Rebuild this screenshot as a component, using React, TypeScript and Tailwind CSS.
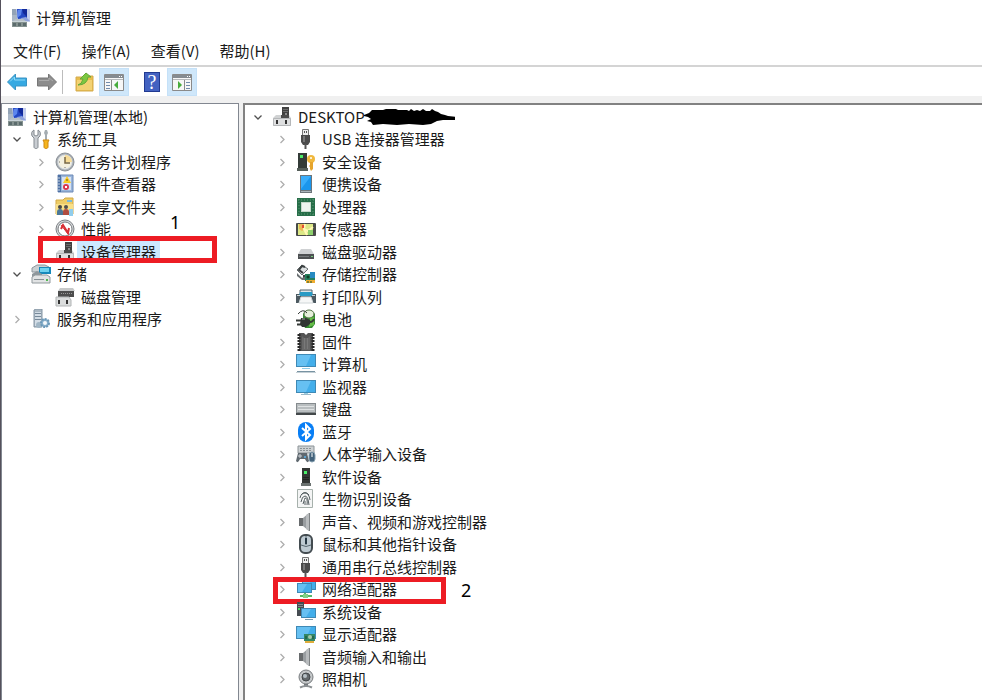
import type { ReactNode } from 'react'
import clsx from 'clsx'

interface TreeItem {
  label: string
  icon: keyof typeof icons
  level: number
  state?: 'open' | 'closed'
  selected?: boolean
  mark?: string
}

const screen = (x: number, y: number, w: number, h: number) => (
  <>
    <rect x={x} y={y} width={w} height={h} fill="#3f89b5" />
    <rect x={x + 1} y={y + 1} width={w - 2} height={h - 2} fill="#43aeea" />
    <path d={`M${x + 1} ${y + 1}h${w - 6}l-5 ${h - 2}h-${w - 11}z`} fill="#66c0f2" />
  </>
)

const computer = (
  <>
    <path d="M1 1h7v12H1z" fill="#a9b6c6" />
    <path d="M1 2h5M1 4h5M1 6h5" stroke="#7f90a5" />
    <path d="M5 1h14v13H7z" fill="#c3cdec" />
    <path d="M6 1h10v9l-9 1z" fill="#2448c4" />
    <path d="M7 2l4-1-1 6-4 3z" fill="#5c86ee" />
    <path d="M11 1h5v8l-4-4z" fill="#12299a" />
    <path d="M10 10l5-1 4 4h-8z" fill="#8fa2dc" />
    <path d="M4 11h8l4 3H2z" fill="#b7c0c7" />
    <path d="M1 14h15v5H1z" fill="#84918f" />
    <path d="M2 15h3v3H2zM7 15h3v3H7zM12 15h3v3h-3z" fill="#5b6b6c" />
    <path d="M1 13.500h15" stroke="#c9d3d8" />
  </>
)

const deviceManager = (
  <>
    <path d="M10 0h7v11h-7z" fill="#414141" />
    <path d="M11 2.500h5M11 4.500h5" stroke="#6d6d6d" />
    <path d="M13 6h2v2h-2z" fill="#8b8b8b" />
    <path d="M4 8h13l2 3v8H1v-8z" fill="#d0d2d3" />
    <path d="M1.500 11.500h17v7h-17z" fill="#dedfe0" stroke="#b5b7b9" />
    <path d="M4 13h2v4H4zM13 13h2v4h-2z" fill="#333" />
    <path d="M9 8h8v3H9z" fill="#4c4c4c" />
  </>
)

const usb = (
  <>
    <path d="M6.500 0.500h6v6h-6z" fill="#eee" stroke="#777" />
    <path d="M8.500 2v2M10.500 2v2" stroke="#555" />
    <path d="M5 6h9v7l-2 3H7l-2-3z" fill="#4b4b4b" />
    <path d="M7 7h2v6H7z" fill="#777" />
    <path d="M9.500 15v5" stroke="#555" strokeWidth="2" />
  </>
)

const speaker = (
  <>
    <path d="M3 6h4v8H3z" fill="#686b6d" />
    <path d="M7 6l6-5v18l-6-5z" fill="#999da0" />
    <path d="M10 3l3-2v18l-3-2z" fill="#b9bcbe" />
    <path d="M13.500 1v18" stroke="#7f8385" />
  </>
)

const icons = {
  computer,
  deviceManager,
  usb,
  speaker,
  tools: (
    <>
      <path d="M3 1v5l2 1 2-1V1c2 1 3 3 2 6L7 9v9c0 2-4 2-4 0V9L1 7c-1-3 0-5 2-6z" fill="#c9cdd2" stroke="#858b91" />
      <path d="M14 1h2l1 3-1 2v5h-2V6l-1-2z" fill="#a5adb2" />
      <path d="M12 11h6l-1 2v5c0 2-4 2-4 0v-5z" fill="#f5b51d" stroke="#ce8712" />
    </>
  ),
  clock: (
    <>
      <circle cx="10" cy="10" r="9" fill="#a8aeb4" stroke="#8a9096" />
      <circle cx="10" cy="10" r="7" fill="#f4f0df" stroke="#dce1e6" />
      <path d="M10 3a7 7 0 017 7h-7z" fill="#f6db96" />
      <path d="M10 5v6h5" fill="none" stroke="#776541" strokeWidth="1.500" />
      <path d="M10 15v1M4 10h1" stroke="#777" />
    </>
  ),
  events: (
    <>
      <path d="M3 1h15v17H3z" fill="#99b6dc" stroke="#6d89b5" />
      <path d="M3 1h3v17H3z" fill="#4d70a4" />
      <path d="M2 4h3M2 7h3M2 10h3M2 13h3M2 16h3" stroke="#c4d0df" />
      <path d="M7 3h9v13H7z" fill="#d7e2f1" />
      <path d="M12 2l4 7H8z" fill="#f9cb24" />
      <path d="M12 5v2" stroke="#705510" />
      <circle cx="11" cy="13" r="3" fill="#db354d" />
      <path d="M10 12l2 2m0-2l-2 2" stroke="#fff" />
    </>
  ),
  shared: (
    <>
      <path d="M1 3h7l2-2h8v16H1z" fill="#edcc67" stroke="#d4a943" />
      <path d="M12 3h5v2h-5z" fill="#78b9dd" />
      <path d="M1 7h17v11H1z" fill="#f8df87" />
      <circle cx="5" cy="10" r="2" fill="#474747" />
      <circle cx="11" cy="10" r="2" fill="#505050" />
      <path d="M2 15q0-3 3-3t3 3v3H2z" fill="#4c7798" />
      <path d="M8 15q0-3 3-3t3 3v3H8z" fill="#b04d40" />
      <path d="M14 12h4v7h-4z" fill="#91cdec" />
    </>
  ),
  performance: (
    <>
      <circle cx="10" cy="10" r="9" fill="#d7dadd" stroke="#7d8184" />
      <circle cx="10" cy="10" r="7" fill="#fff" stroke="#75797c" />
      <path d="M6 10l2-4 5 8 1-5" fill="none" stroke="#d82f34" strokeWidth="2" />
      <path d="M6 6l7 9" stroke="#d82f34" />
    </>
  ),
  storage: (
    <>
      <path d="M1 4l5-3h8l4 2v5H1z" fill="#cbd0d3" stroke="#8c969c" />
      <path d="M8 3h12v7H8z" fill="#1689bb" />
      <path d="M9 4h9v4H9z" fill="#6ed1ee" />
      <path d="M1 10l5-3 5 3v4H1z" fill="#8e979c" />
      <path d="M1 13l3-2h12l3 2v6H1z" fill="#e1e3e4" stroke="#91999d" />
      <path d="M3 15.500h10" stroke="#899297" />
      <path d="M15 15h2v2h-2z" fill="#53b852" />
    </>
  ),
  diskManagement: (
    <>
      <path d="M3 4h16v6H3z" fill="#4d4d4d" />
      <path d="M5 1h13l2 3H3z" fill="#c6c8c9" />
      <path d="M6 6.500h12" stroke="#999" strokeDasharray="1 1" />
      <path d="M1 10h13l2 3v6H1z" fill="#dbdddd" stroke="#b1b4b5" />
      <path d="M3 13h2v4H3zM11 13h2v4h-2z" fill="#333" />
    </>
  ),
  services: (
    <>
      <path d="M3 1l2-1h6v18H3z" fill="#aab7c2" stroke="#8495a4" />
      <path d="M4 3h6v14H4z" fill="#d3dde6" />
      <path d="M4 4.500h6M4 7.500h6M4 10.500h6" stroke="#778999" />
      <circle cx="8" cy="16" r="3" fill="#a1b6c5" />
      <circle cx="14" cy="14" r="4" fill="#88afcb" stroke="#6b98b8" strokeWidth="2" strokeDasharray="2 1" />
      <circle cx="14" cy="14" r="2" fill="#f5f8fb" />
    </>
  ),
  security: (
    <>
      <path d="M2 1h9v15H2z" fill="#343b38" />
      <path d="M1 16h11v3H1z" fill="#555e59" />
      <path d="M4 3h3v3H4z" fill="#4bea66" />
      <circle cx="15" cy="7" r="4" fill="#f0b83e" />
      <circle cx="15" cy="6" r="1" fill="#fff" />
      <path d="M14 10h3v7l-2 2-1-2v-2l-1-1 1-1z" fill="#e6a52d" />
    </>
  ),
  portable: (
    <>
      <path d="M4 1h12v18H4z" fill="#6d757a" />
      <path d="M5 2h10v14H5z" fill="#1b96ec" />
      <path d="M5 2h10L5 15z" fill="#39adfa" />
      <path d="M5 17.500h10" stroke="#aab4ba" />
    </>
  ),
  processor: (
    <>
      <path d="M1 1h18v18H1z" fill="#276e49" />
      <path d="M3 2v16M17 2v16M2 3h16M2 17h16" stroke="#5b9874" strokeDasharray="1 2" />
      <path d="M5 5h10v10H5z" fill="#c5d8ca" />
      <path d="M6 6h8v8H6z" fill="#edf4ef" />
    </>
  ),
  sensor: (
    <>
      <rect y="4" width="20" height="13" rx="1" fill="#494b49" />
      <path d="M2 5h15v11H2z" fill="#dce886" />
      <path d="M3 5h6v5l-3 2-3-2z" fill="#edb755" />
      <path d="M9 5l-1 5 4 2 5-4M8 10l3 6" fill="none" stroke="#fff8b5" strokeWidth="2" />
      <path d="M6 6h2v3H6z" fill="#e24f37" />
      <path d="M12 11h5v5h-5z" fill="#8ed06d" />
    </>
  ),
  drive: (
    <>
      <path d="M5 7h10l3 5H2z" fill="#cfd1d3" />
      <path d="M2 12h16v5H2z" fill="#4d5052" />
      <path d="M3 14.500h10" stroke="#767a7c" />
      <path d="M15 14h2v1h-2z" fill="#74ce7b" />
    </>
  ),
  storageController: (
    <>
      <path d="M6 1l6 4-6 6-5-5z" fill="#dce0e1" stroke="#6a7072" />
      <path d="M9 3L6 2 3 6l4 3M8 11v3h5" fill="none" stroke="#3b4041" strokeWidth="2" />
      <path d="M1 9l5 5 4-2v4H6l-5-4z" fill="#686e70" />
      <path d="M9 10h10v7H9z" fill="#25805d" />
      <path d="M14 8h5v6h-5z" fill="#278ac1" />
      <path d="M10 16h9v3h-9z" fill="#efad30" />
      <path d="M12 17v2M15 17v2M11 12h2v2h-2z" stroke="#155436" />
    </>
  ),
  printer: (
    <>
      <path d="M4 3h12v4H4z" fill="#dbe5e9" stroke="#52626c" />
      <path d="M0 7h4l2 2h8l2-2h4v9h-4l-2-4H6l-2 4H0z" fill="#4c5960" />
      <path d="M4 5h12l1 4H3z" fill="#289ac4" />
      <path d="M5 10h10l2 6H3z" fill="#f6f7f7" stroke="#d0d6d8" />
      <path d="M1 8.500h3M16 8.500h3" stroke="#c9d4d8" />
    </>
  ),
  battery: (
    <>
      <path d="M7 5l2-3h7l3 3v10l-3 4H9l-2-4z" fill="#368b32" />
      <ellipse cx="13" cy="5" rx="5" ry="4" fill="#e5efda" stroke="#527245" />
      <path d="M14 9l4-1v8l-5 2z" fill="#65bd47" />
      <path d="M2 5q5-6 9-1" fill="none" stroke="#343936" />
      <path d="M0 11.500h5M1 15.500h5" fill="none" stroke="#343936" strokeWidth="2" />
      <path d="M5 9h5l4 2v4l-4 3H6l-2-3z" fill="#303632" />
      <path d="M14 13q3 0 4-3" fill="none" stroke="#343936" strokeWidth="2" />
      <path d="M6 10h3" stroke="#9a9f9b" />
    </>
  ),
  firmware: (
    <>
      <path d="M3 1h5l2 2 2-2h5v18H3z" fill="#555" />
      <path d="M3 2v17M17 2v17" stroke="#282828" strokeWidth="3" strokeDasharray="2 1" />
      <path d="M6 4l2 2h4l2-2v14H6z" fill="#686868" />
      <path d="M8.500 6v11M11.500 6v11" stroke="#797979" />
    </>
  ),
  pc: (
    <>
      {screen(0, 0, 20, 13)}
      <path d="M6 14.500h8" stroke="#8fcbe7" />
      <path d="M1 17.500h18" stroke="#7893a2" />
      <path d="M0 18.500h20" stroke="#c5d0d6" />
    </>
  ),
  monitor: (
    <>
      {screen(0, 3, 20, 13)}
      <path d="M8 16h4v1H8z" fill="#9ad0e6" />
      <path d="M5 17.500h10" stroke="#9dbac8" />
    </>
  ),
  keyboard: (
    <>
      <path d="M0 4h20v12H0z" fill="#858b8e" />
      <path d="M1 5h18v8H1z" fill="#b9bec0" />
      <path d="M2 7.500h16M2 10.500h16" stroke="#dfe2e3" />
      <path d="M0 15h20" stroke="#43484a" strokeWidth="2" />
    </>
  ),
  bluetooth: (
    <>
      <rect x="2" width="16" height="20" rx="8" fill="#087ef5" />
      <path d="M6 6l8 7-4 4V3l4 4-8 7" fill="none" stroke="#fff" strokeWidth="2" />
    </>
  ),
  hid: (
    <>
      <path d="M2 2h16v7H2z" fill="#cdd1d3" stroke="#8c9397" />
      <path d="M4 4.500h12M4 6.500h12" stroke="#8b9296" strokeDasharray="2 1" />
      <path d="M2 9h9l2 8q-2 3-4-2H4q-2 5-4 2z" fill="#606970" />
      <path d="M4 10v4M2 12h4" stroke="#cdd2d6" />
      <rect x="13" y="8" width="6" height="10" rx="3" fill="#43627b" stroke="#87a1b1" />
      <path d="M16 9v4" stroke="#fff" />
      <path d="M8 12h2v2H8z" fill="#58a2cf" />
    </>
  ),
  software: (
    <>
      <path d="M6 1h8v15H6z" fill="#343735" />
      <path d="M5 16h10v3H5z" fill="#6b7270" />
      <path d="M8 4h3v3H8z" fill="#48ef68" />
      <path d="M7 10.500h6M7 12.500h6" stroke="#222" />
    </>
  ),
  fingerprint: (
    <>
      <path d="M1.500 0.500h15v18h-15z" fill="#f4f5f5" stroke="#a7b1ac" />
      <g fill="none" stroke="#555e62">
        <path d="M5 6q4-5 8 0M4 9q1-5 5-5t5 7M5 13q1-6 4-6t4 9M7 15q2-6 2-6 3 0 2 7M9 16l0-4" />
      </g>
    </>
  ),
  mouse: (
    <>
      <rect x="4" y="1" width="12" height="18" rx="5" fill="#bdc9d1" stroke="#434b50" strokeWidth="2" />
      <path d="M10 2v9M5 11q5 3 10 0" fill="none" stroke="#596871" />
      <path d="M10 4v6" stroke="#263743" strokeWidth="2" />
    </>
  ),
  network: (
    <>
      {screen(6, 1, 14, 10)}
      {screen(1, 4, 15, 10)}
      <path d="M9 14v3M4 17h12" stroke="#55ba67" strokeWidth="2" />
      <path d="M7 15h5v4H7z" fill="#82d088" />
    </>
  ),
  system: (
    <>
      <path d="M1 0h7v14H1z" fill="#454c51" />
      <path d="M2 2.500h5M2 4.500h5" stroke="#838b90" />
      <path d="M2 6h2v2H2z" fill="#48dd64" />
      {screen(5, 6, 15, 10)}
      <path d="M9 17.500h8" stroke="#7999aa" />
    </>
  ),
  display: (
    <>
      {screen(0, 2, 20, 13)}
      <path d="M8 10h11v7H8z" fill="#348765" />
      <circle cx="14" cy="13" r="2" fill="#a7c9a8" />
      <path d="M9 17h9v2H9z" fill="#e0ae3c" />
      <path d="M10 12v3M17 12v3" stroke="#174a34" />
    </>
  ),
  camera: (
    <>
      <circle cx="10" cy="8" r="7" fill="#c4c7c9" stroke="#777b7e" />
      <circle cx="10" cy="8" r="4" fill="#63686b" stroke="#42474a" />
      <circle cx="9" cy="7" r="2" fill="#b6c0c6" />
      <path d="M8 15h4v2H8z" fill="#74797c" />
      <path d="M4 18.500q6-3 12 0" fill="none" stroke="#8c9194" strokeWidth="2" />
    </>
  )
}

const consoleTree: TreeItem[] = [
  { label: '计算机管理(本地)', icon: 'computer', level: 0 },
  { label: '系统工具', icon: 'tools', level: 0, state: 'open' },
  { label: '任务计划程序', icon: 'clock', level: 1, state: 'closed' },
  { label: '事件查看器', icon: 'events', level: 1, state: 'closed' },
  { label: '共享文件夹', icon: 'shared', level: 1, state: 'closed' },
  { label: '性能', icon: 'performance', level: 1, state: 'closed' },
  { label: '设备管理器', icon: 'deviceManager', level: 1, selected: true, mark: '1' },
  { label: '存储', icon: 'storage', level: 0, state: 'open' },
  { label: '磁盘管理', icon: 'diskManagement', level: 1 },
  { label: '服务和应用程序', icon: 'services', level: 0, state: 'closed' }
]

const devices: TreeItem[] = [
  { label: 'DESKTOP', icon: 'deviceManager', level: 0, state: 'open' },
  { label: 'USB 连接器管理器', icon: 'usb', level: 1, state: 'closed' },
  { label: '安全设备', icon: 'security', level: 1, state: 'closed' },
  { label: '便携设备', icon: 'portable', level: 1, state: 'closed' },
  { label: '处理器', icon: 'processor', level: 1, state: 'closed' },
  { label: '传感器', icon: 'sensor', level: 1, state: 'closed' },
  { label: '磁盘驱动器', icon: 'drive', level: 1, state: 'closed' },
  { label: '存储控制器', icon: 'storageController', level: 1, state: 'closed' },
  { label: '打印队列', icon: 'printer', level: 1, state: 'closed' },
  { label: '电池', icon: 'battery', level: 1, state: 'closed' },
  { label: '固件', icon: 'firmware', level: 1, state: 'closed' },
  { label: '计算机', icon: 'pc', level: 1, state: 'closed' },
  { label: '监视器', icon: 'monitor', level: 1, state: 'closed' },
  { label: '键盘', icon: 'keyboard', level: 1, state: 'closed' },
  { label: '蓝牙', icon: 'bluetooth', level: 1, state: 'closed' },
  { label: '人体学输入设备', icon: 'hid', level: 1, state: 'closed' },
  { label: '软件设备', icon: 'software', level: 1, state: 'closed' },
  { label: '生物识别设备', icon: 'fingerprint', level: 1, state: 'closed' },
  { label: '声音、视频和游戏控制器', icon: 'speaker', level: 1, state: 'closed' },
  { label: '鼠标和其他指针设备', icon: 'mouse', level: 1, state: 'closed' },
  { label: '通用串行总线控制器', icon: 'usb', level: 1, state: 'closed' },
  { label: '网络适配器', icon: 'network', level: 1, state: 'closed', mark: '2' },
  { label: '系统设备', icon: 'system', level: 1, state: 'closed' },
  { label: '显示适配器', icon: 'display', level: 1, state: 'closed' },
  { label: '音频输入和输出', icon: 'speaker', level: 1, state: 'closed' },
  { label: '照相机', icon: 'camera', level: 1, state: 'closed' }
]

const Icon = ({ children }: { children: ReactNode }) => (
  <svg viewBox="0 0 20 20" className="size-5 shrink-0" aria-hidden="true">
    {children}
  </svg>
)

const Scribble = () => (
  <svg
    viewBox="0 0 92 18"
    className="absolute left-full top-1/2 -ml-1.5 h-[18px] w-[92px] -translate-y-1/2"
    aria-hidden="true"
  >
    <path
      d="M1 7l5-2 3-3h11l3-1h10l2 1h9l2 1 2-2 3 2 3-1 3 1 3-2 3 2h4l2-2 3 2 3 1 3 2 4 1 3 1 9 1v3H80l-6 1-6 3-8 1-14-1-12 1-14-1-10 1-2-3-4-1 4-2-3-2-4-1z"
      fill="#000"
    />
  </svg>
)

const Tree = ({ items, label }: { items: TreeItem[]; label: string }) => (
  <ul role="tree" aria-label={label} className="grid auto-rows-[23px_22px]">
    {items.map((item) => (
      <li
        key={item.label}
        role="treeitem"
        aria-selected={!!item.selected}
        className={clsx('relative flex items-center', item.level === 1 && 'pl-6')}
      >
        {item.state && (
          <button
            type="button"
            aria-label={`${item.state === 'open' ? '折叠' : '展开'} ${item.label}`}
            className="mr-1 flex size-5 shrink-0 items-center justify-center"
          >
            <svg viewBox="0 0 10 10" className="size-[10px]" fill="none">
              {item.state === 'open' ? (
                <path d="M1.500 3.500L5 7l3.500-3.500" stroke="#505050" strokeWidth="1.300" />
              ) : (
                <path d="M3.500 2L7 5.500 3.500 9" stroke="#adadad" strokeWidth="1.300" />
              )}
            </svg>
          </button>
        )}
        {!item.state && item.level === 1 && <span className="mr-1 w-5 shrink-0" />}
        <Icon>{icons[item.icon]}</Icon>
        <button
          type="button"
          className={clsx(
            'relative ml-0.5 h-full whitespace-nowrap px-1 leading-[22px]',
            item.selected && 'bg-[#cce8ff]'
          )}
        >
          {item.label}
          {item.label === 'DESKTOP' && <Scribble />}
        </button>

        {/* Marcação numerada */}
        {item.mark === '1' && (
          <>
            <span className="absolute -top-1 left-[31px] h-[27px] w-[179px] border-[5px] border-[#ed1c24]" />
            <span className="absolute -top-8 left-[163px] font-['Noto_Sans'] text-lg text-black">1</span>
          </>
        )}
        {item.mark === '2' && (
          <>
            <span className="absolute -top-px left-[25px] h-[27px] w-[173px] border-[5px] border-[#ed1c24]" />
            <span className="absolute -top-0.5 left-[213px] font-['Noto_Sans'] text-lg text-black">2</span>
          </>
        )}
      </li>
    ))}
  </ul>
)

const PanelIcon = ({ flip = false }: { flip?: boolean }) => (
  <Icon>
    <path d="M0.500 2.500h19v16H0.500z" fill="#f7f7f7" stroke="#8a8a8a" />
    <path d="M1 3h18v3H1z" fill="#858b91" />
    <path d="M15 4.500h3" stroke="#fff" strokeDasharray="1 1" />
    <path d="M1 7.500h18" stroke="#b5b8bb" />
    <g transform={flip ? 'translate(20 0) scale(-1 1)' : undefined}>
      <path d="M7.500 8v10" stroke="#8a8a8a" />
      <path d="M2 10.500h4M2 13.500h4M2 16.500h4" stroke="#728cad" />
      <path d="M14 9v8l-4-4z" fill="#48ac3c" />
    </g>
  </Icon>
)

const ToolButton = ({ label, active, children }: { label: string; active?: boolean; children: ReactNode }) => (
  <button
    type="button"
    aria-label={label}
    className={clsx('flex h-7 w-[30px] items-center justify-center', active && 'border border-[#c5e1f8] bg-[#cfe7fa]')}
  >
    {children}
  </button>
)

export default function App() {
  return (
    <div className="flex h-screen flex-col overflow-hidden border-l border-[#55515c] bg-white font-['Noto_Sans_CJK_SC',sans-serif] text-[15px] text-[#1a1a1a]">
      {/* Título */}
      <header className="flex h-9 shrink-0 items-center gap-[5px] pl-[10px]">
        <Icon>{icons.computer}</Icon>
        <h1>计算机管理</h1>
      </header>

      <nav className="flex h-[31px] shrink-0 items-center gap-5 border-b-2 border-[#d4d4d4] pl-3 pt-px">
        {['文件(F)', '操作(A)', '查看(V)', '帮助(H)'].map((menu) => (
          <button key={menu} type="button">
            {menu}
          </button>
        ))}
      </nav>

      {/* Barra de ferramentas */}
      <div className="flex h-[29px] shrink-0 items-center pl-px">
        <ToolButton label="后退">
          <Icon>
            <path d="M0.500 10l8-8v4h11v8h-11v4z" fill="#36a9e2" stroke="#3a94c4" />
            <path d="M3 9.500L7.500 5v3H18" fill="none" stroke="#8cdaf8" />
          </Icon>
        </ToolButton>
        <ToolButton label="前进">
          <Icon>
            <path d="M19.500 10l-8-8v4h-11v8h11v4z" fill="#8c8c8c" stroke="#777" />
            <path d="M2 8.500h10V6l4 3" fill="none" stroke="#aaa" />
          </Icon>
        </ToolButton>
        <span className="mr-1.5 h-6 w-px bg-[#bcbcbc]" />
        <ToolButton label="上一级">
          <Icon>
            <path d="M2 5h6l2-1h9v15H2z" fill="#e8bd4c" stroke="#d4ab4e" />
            <path d="M3 8h15v10H3z" fill="#f3d274" />
            <path d="M4 13q4-1 5-6H6l6-6 5 4h-3q-1 8-10 8z" fill="#7cc740" stroke="#65a83a" />
          </Icon>
        </ToolButton>
        <ToolButton label="显示/隐藏控制台树" active>
          <PanelIcon />
        </ToolButton>
        <span className="w-2" />
        <ToolButton label="帮助">
          <span className="flex h-5 w-4 items-center justify-center border border-[#213a91] bg-[#4362c1] font-['Liberation_Serif',serif] text-xl leading-5 text-white">
            ?
          </span>
        </ToolButton>
        <ToolButton label="显示/隐藏操作窗格" active>
          <PanelIcon flip />
        </ToolButton>
      </div>

      {/* Conteúdo */}
      <main className="flex min-h-0 flex-1 gap-1 bg-[#f0f0f0] pt-[7px]">
        <section className="w-[238px] shrink-0 overflow-hidden border border-b-0 border-[#828790] bg-white pl-[5px] pt-px">
          <Tree items={consoleTree} label="控制台树" />
        </section>
        <section className="min-w-0 flex-1 overflow-hidden border-l-2 border-t-2 border-[#828282] bg-white pl-[3px]">
          <Tree items={devices} label="设备" />
        </section>
      </main>
    </div>
  )
}
